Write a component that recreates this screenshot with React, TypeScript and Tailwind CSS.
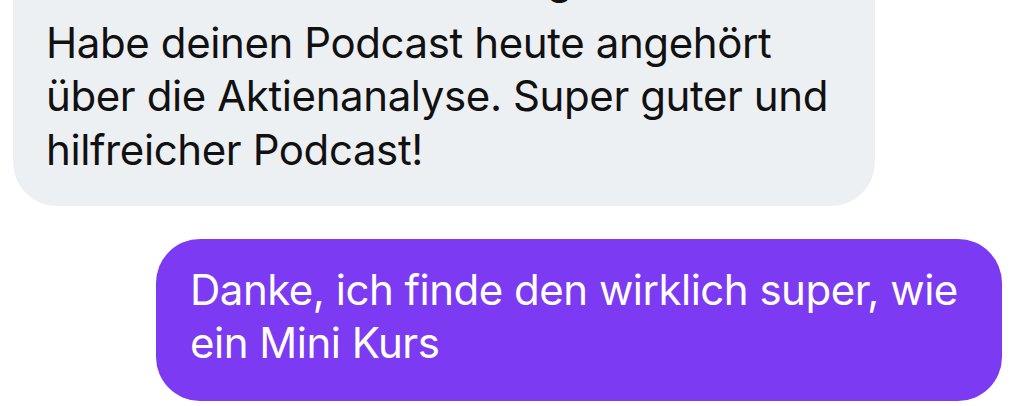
import React from "react";

export default function App() {
  const font = { fontFamily: "Inter, 'Noto Sans', sans-serif" };
  return (
    <div
      className="w-[1024px] h-[406px] overflow-hidden bg-white flex flex-col"
      style={font}
    >
      <div className="ml-[13px] mt-[-73px] w-[862px] rounded-[44px] bg-[#edf0f3] pl-[33px] pr-[30px] pt-[25px] pb-[30px] text-[42px] leading-[53.5px] text-[#111111] tracking-[-0.4px]">
        <div className="whitespace-nowrap mb-[10px]">Hallo! Ich wollte dir nur sagen</div>
        <div className="whitespace-nowrap">Habe deinen Podcast heute angehört</div>
        <div className="whitespace-nowrap">über die Aktienanalyse. Super guter und</div>
        <div className="whitespace-nowrap">hilfreicher Podcast!</div>
      </div>
      <div className="mt-[33px] ml-[156px] w-[846px] rounded-[44px] bg-[#7c3af2] pl-[34px] pr-[30px] pt-[25px] pb-[32px] text-[42px] leading-[52.5px] text-white tracking-[-0.5px]">
        <div className="whitespace-nowrap">Danke, ich finde den wirklich super, wie</div>
        <div className="whitespace-nowrap">ein Mini Kurs</div>
      </div>
    </div>
  );
}
